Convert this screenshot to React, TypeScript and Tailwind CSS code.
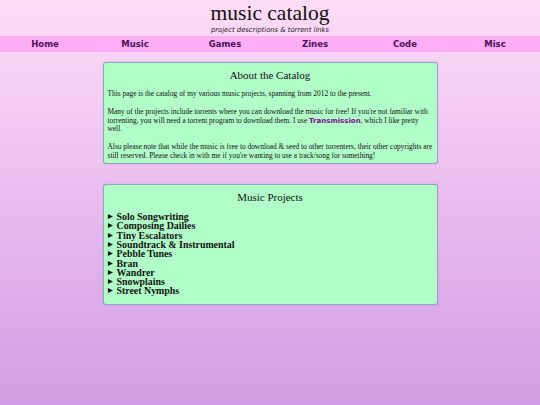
import React from "react";

const navItems = ["Home", "Music", "Games", "Zines", "Code", "Misc"];
const projects = [
  "Solo Songwriting",
  "Composing Dailies",
  "Tiny Escalators",
  "Soundtrack & Instrumental",
  "Pebble Tunes",
  "Bran",
  "Wandrer",
  "Snowplains",
  "Street Nymphs",
];

export default function App() {
  return (
    <div className="w-[540px] h-[405px] overflow-hidden bg-gradient-to-b from-[#ffdcf8] to-[#d29de4] text-[#111]">
      <header className="pt-[1px] text-center">
        <h1 className="font-['Liberation_Serif',serif] text-[21.5px] leading-[25px] text-[#111]">music catalog</h1>
        <p className="font-['DejaVu_Sans',sans-serif] italic text-[6.8px] leading-[9px] text-[#222]">project descriptions &amp; torrent links</p>
      </header>
      <nav className="mt-[1px] grid grid-cols-6 h-[16px] bg-[#ffaef6] items-center">
        {navItems.map((n) => (
          <span key={n} className="text-center font-['DejaVu_Sans',sans-serif] font-bold text-[8.5px] text-[#4b0f5c]">
            {n}
          </span>
        ))}
      </nav>
      <main className="flex flex-col items-center gap-[20.5px] pt-[10px]">
        <section className="w-[335px] bg-[#b0fdc8] border border-[#8fa6c4] rounded-[3px] shadow-[0_0_1px_rgba(60,60,120,0.4)] px-[4px] pt-[5px] pb-[2px] font-['Liberation_Serif',serif] text-[7.4px] leading-[8.6px]">
          <h2 className="text-center text-[11px] leading-[14px] mb-[8px]">About the Catalog</h2>
          <p className="mb-[9.5px] whitespace-nowrap">This page is the catalog of my various music projects, spanning from 2012 to the present.</p>
          <p className="mb-[9.5px] whitespace-nowrap">
            Many of the projects include torrents where you can download the music for free! If you're not familiar with
            <br />
            torrenting, you will need a torrent program to download them. I use{" "}
            <span className="font-['DejaVu_Sans',sans-serif] font-bold text-[7px] text-[#7c0c8c]">Transmission</span>, which I like pretty
            <br />
            well.
          </p>
          <p className="whitespace-nowrap">
            Also please note that while the music is free to download &amp; seed to other torrenters, their other copyrights are
            <br />
            still reserved. Please check in with me if you're wanting to use a track/song for something!
          </p>
        </section>
        <section className="w-[335px] bg-[#b0fdc8] border border-[#8fa6c4] rounded-[3px] shadow-[0_0_1px_rgba(60,60,120,0.4)] px-[4px] pt-[5px] pb-[8px] font-['Liberation_Serif',serif]">
          <h2 className="text-center text-[11px] leading-[14px] mb-[8px]">Music Projects</h2>
          <ul className="text-[9.9px] leading-[9.3px] font-bold">
            {projects.map((p) => (
              <li key={p} className="flex items-center h-[9.3px]">
                <span className="text-[6px] w-[9px] inline-block">▶</span>
                <span>{p}</span>
              </li>
            ))}
          </ul>
        </section>
      </main>
    </div>
  );
}
